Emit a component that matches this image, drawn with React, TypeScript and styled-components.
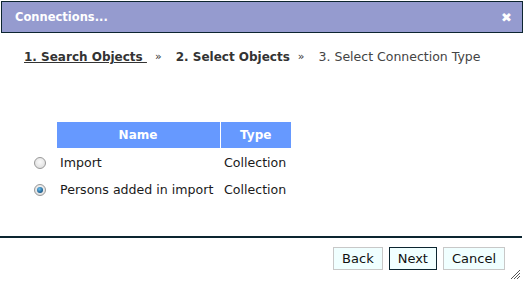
import React from 'react';
import styled, { createGlobalStyle } from 'styled-components';

const GlobalStyle = createGlobalStyle`
  *, *::before, *::after {
    box-sizing: border-box;
  }
  html, body {
    margin: 0;
    padding: 0;
    background: #ffffff;
  }
  body {
    font-family: "DejaVu Sans", Verdana, sans-serif;
    font-size: 12.5px;
    color: #222;
  }
`;

const Dialog = styled.div`
  width: 524px;
  height: 281px;
  display: flex;
  flex-direction: column;
  background: #fff;
  position: relative;
  overflow: hidden;
`;

const TitleBar = styled.div`
  margin: 1px 1px 0 1px;
  height: 32px;
  border: 1px solid #0c2530;
  background: #959bcf;
  display: flex;
  align-items: center;
  justify-content: space-between;
  padding: 0 10px 0 13px;
  color: #fff;
  font-weight: bold;
  font-size: 11.5px;
`;

const Close = styled.span`
  font-size: 13px;
  line-height: 1;
`;

const Steps = styled.div`
  display: flex;
  align-items: center;
  padding: 16px 0 0 24px;
  line-height: 16px;
  font-size: 12.5px;
  color: #333;
`;

const Step = styled.span<{ $done?: boolean; $active?: boolean }>`
  font-weight: ${p => (p.$done || p.$active ? 'bold' : 'normal')};
  font-size: ${p => (p.$done || p.$active ? '12px' : '12.5px')};
  text-decoration: ${p => (p.$done ? 'underline' : 'none')};
  color: ${p => (p.$done || p.$active ? '#333' : '#444')};
  white-space: pre;
`;

const Sep = styled.span`
  margin: 0 14px 0 8px;
  font-size: 11px;
  color: #333;
`;

const Body = styled.div`
  flex: 1;
  padding: 57px 0 0 33px;
`;

const Table = styled.table`
  border-collapse: collapse;
  font-size: 12.6px;
`;

const Th = styled.th<{ $w: number }>`
  background: #6699ff;
  color: #fff;
  font-weight: bold;
  font-size: 12px;
  height: 26px;
  padding: 0 4px;
  width: ${p => p.$w}px;
  text-align: center;
  border-left: 1px solid #fff;
`;

const Td = styled.td`
  height: 27px;
  padding: 2px 4px 0 4px;
  white-space: nowrap;
  color: #1a1a1a;
`;

const RadioCell = styled.td`
  width: 23px;
  padding: 0;
  vertical-align: middle;
`;

const Radio = styled.span<{ $checked?: boolean }>`
  display: block;
  width: 12px;
  height: 12px;
  border-radius: 50%;
  margin-left: 1px;
  margin-top: 3px;
  border: 1px solid #999;
  background: radial-gradient(circle at 50% 40%, #fafafa 0%, #d8d8d8 100%);
  position: relative;
  &::after {
    content: '';
    display: ${p => (p.$checked ? 'block' : 'none')};
    position: absolute;
    left: 2px;
    top: 2px;
    width: 6px;
    height: 6px;
    border-radius: 50%;
    background: radial-gradient(circle at 40% 35%, #6cc0f0 0%, #1a5c8c 70%, #0d3a60 100%);
  }
`;

const Footer = styled.div`
  border-top: 2px solid #0c2530;
  margin-right: 2px;
  height: 45px;
  display: flex;
  justify-content: flex-end;
  align-items: flex-start;
  gap: 6px;
  padding: 9px 17px 0 0;
  position: relative;
`;

const Button = styled.button<{ $primary?: boolean }>`
  font-family: "DejaVu Sans", Verdana, sans-serif;
  font-size: 13px;
  color: #111;
  height: 23px;
  padding: 0 8px;
  background: #f0ffff;
  border: 1px solid ${p => (p.$primary ? '#0c2530' : '#c8c8c8')};
  border-radius: 0;
`;

const Grip = styled.svg`
  position: absolute;
  right: 1px;
  bottom: 1px;
`;

export default function App() {
  return (
    <>
      <GlobalStyle />
      <Dialog>
        <TitleBar>
          <span>Connections...</span>
          <Close>✖</Close>
        </TitleBar>
        <Steps>
          <Step $done>1. Search Objects </Step>
          <Sep>»</Sep>
          <Step $active>2. Select Objects</Step>
          <Sep>»</Sep>
          <Step>3. Select Connection Type</Step>
        </Steps>
        <Body>
          <Table>
            <thead>
              <tr>
                <th style={{ width: 23, padding: 0 }} />
                <Th $w={164}>Name</Th>
                <Th $w={71}>Type</Th>
              </tr>
            </thead>
            <tbody>
              <tr>
                <RadioCell><Radio /></RadioCell>
                <Td>Import</Td>
                <Td>Collection</Td>
              </tr>
              <tr>
                <RadioCell><Radio $checked /></RadioCell>
                <Td>Persons added in import</Td>
                <Td>Collection</Td>
              </tr>
            </tbody>
          </Table>
        </Body>
        <Footer>
          <Button>Back</Button>
          <Button $primary>Next</Button>
          <Button>Cancel</Button>
          <Grip width="11" height="11" viewBox="0 0 11 11">
            <path d="M10 1 L1 10 M10 4 L4 10 M10 7 L7 10" stroke="#555" strokeWidth="1" />
          </Grip>
        </Footer>
      </Dialog>
    </>
  );
}
